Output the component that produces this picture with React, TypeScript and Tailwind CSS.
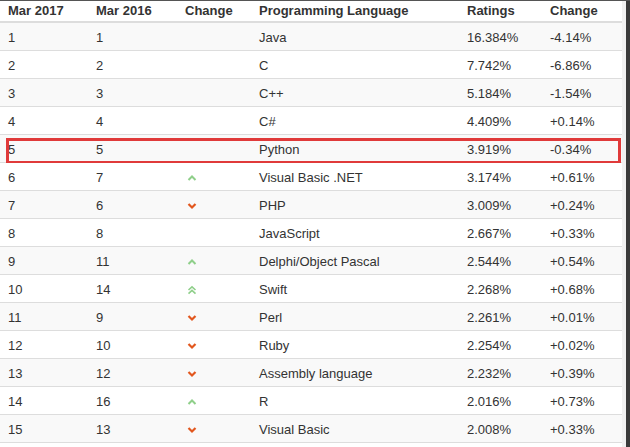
import { ReactNode } from 'react'

type Trend = 'up' | 'down' | 'up2' | null

interface Row {
  now: number
  prev: number
  trend: Trend
  lang: string
  rating: string
  change: string
}

const ROWS: Row[] = [
  { now: 1, prev: 1, trend: null, lang: 'Java', rating: '16.384%', change: '-4.14%' },
  { now: 2, prev: 2, trend: null, lang: 'C', rating: '7.742%', change: '-6.86%' },
  { now: 3, prev: 3, trend: null, lang: 'C++', rating: '5.184%', change: '-1.54%' },
  { now: 4, prev: 4, trend: null, lang: 'C#', rating: '4.409%', change: '+0.14%' },
  { now: 5, prev: 5, trend: null, lang: 'Python', rating: '3.919%', change: '-0.34%' },
  { now: 6, prev: 7, trend: 'up', lang: 'Visual Basic .NET', rating: '3.174%', change: '+0.61%' },
  { now: 7, prev: 6, trend: 'down', lang: 'PHP', rating: '3.009%', change: '+0.24%' },
  { now: 8, prev: 8, trend: null, lang: 'JavaScript', rating: '2.667%', change: '+0.33%' },
  { now: 9, prev: 11, trend: 'up', lang: 'Delphi/Object Pascal', rating: '2.544%', change: '+0.54%' },
  { now: 10, prev: 14, trend: 'up2', lang: 'Swift', rating: '2.268%', change: '+0.68%' },
  { now: 11, prev: 9, trend: 'down', lang: 'Perl', rating: '2.261%', change: '+0.01%' },
  { now: 12, prev: 10, trend: 'down', lang: 'Ruby', rating: '2.254%', change: '+0.02%' },
  { now: 13, prev: 12, trend: 'down', lang: 'Assembly language', rating: '2.232%', change: '+0.39%' },
  { now: 14, prev: 16, trend: 'up', lang: 'R', rating: '2.016%', change: '+0.73%' },
  { now: 15, prev: 13, trend: 'down', lang: 'Visual Basic', rating: '2.008%', change: '+0.33%' },
]

function TrendIcon({ trend }: { trend: Trend }) {
  if (trend === 'up')
    return (
      <svg width="10" height="8" viewBox="0 0 10 8" className="ml-[1px]">
        <path d="M1.5 6 L5 2.5 L8.5 6" fill="none" stroke="#8fcf8a" strokeWidth="2" />
      </svg>
    )
  if (trend === 'up2')
    return (
      <svg width="10" height="10" viewBox="0 0 10 10" className="ml-[1px]">
        <path d="M1.5 5 L5 1.8 L8.5 5 M1.5 8.6 L5 5.4 L8.5 8.6" fill="none" stroke="#8fcf8a" strokeWidth="1.6" />
      </svg>
    )
  if (trend === 'down')
    return (
      <svg width="10" height="8" viewBox="0 0 10 8" className="ml-[1px]">
        <path d="M1.5 2 L5 5.5 L8.5 2" fill="none" stroke="#e2571e" strokeWidth="2.2" />
      </svg>
    )
  return null
}

function Cells({ children, bold }: { children: ReactNode[]; bold?: boolean }) {
  const widths = ['w-[88px]', 'w-[89px]', 'w-[74px]', 'w-[208px]', 'w-[83px]', 'flex-1']
  return (
    <>
      {children.map((c, i) => (
        <div key={i} className={`${widths[i]} flex items-center ${bold ? 'font-bold' : ''}`}>
          {c}
        </div>
      ))}
    </>
  )
}

export default function App() {
  return (
    <div
      className="w-[630px] h-[447px] bg-white text-[#333] text-[13px] flex overflow-hidden relative"
      style={{ fontFamily: '"Liberation Sans", Arial, sans-serif' }}
    >
      <div className="absolute top-0 left-0 right-0 h-[1px] bg-[#555]" />
      <div className="w-[622px] flex flex-col">
        <div className="h-[23px] pt-[1px] pl-[8px] flex items-center border-b-2 border-[#ddd]">
          <Cells bold>
            {['Mar 2017', 'Mar 2016', 'Change', 'Programming Language', 'Ratings', 'Change']}
          </Cells>
        </div>
        {ROWS.map((r) => (
          <div
            key={r.now}
            className={`h-[28px] pt-[2px] pl-[8px] flex items-center border-b border-[#ddd] relative ${
              r.now % 2 === 1 ? 'bg-[#f9f9f9]' : 'bg-white'
            }`}
          >
            <Cells>
              {[
                r.now,
                r.prev,
                <span className="pl-[1px] flex"><TrendIcon trend={r.trend} /></span>,
                r.lang,
                r.rating,
                r.change,
              ]}
            </Cells>
            {r.lang === 'Python' && (
              <div className="absolute left-[6px] top-[3px] w-[615px] h-[26px] border-[3px] border-[#e03a3a]" />
            )}
          </div>
        ))}
      </div>
      <div className="w-[4px] bg-[#f1f1f1]" />
      <div className="w-[4px] bg-[#3a3a3a]" />
    </div>
  )
}
